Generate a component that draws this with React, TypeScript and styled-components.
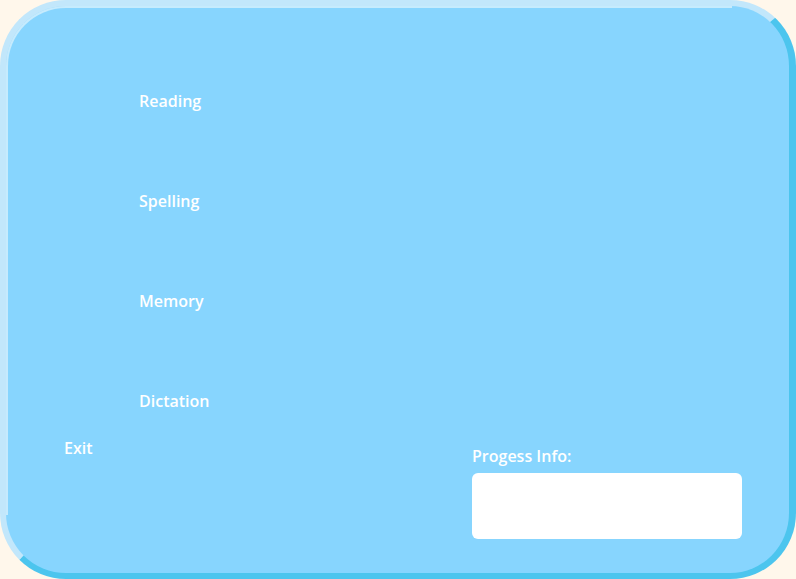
import React from "react";
import styled, { createGlobalStyle } from "styled-components";

const Global = createGlobalStyle`
  html, body { margin: 0; padding: 0; background: #FFF7EB; }
  body { font-family: "Open Sans", "Liberation Sans", sans-serif; }
  * { box-sizing: border-box; }
`;

const Panel = styled.div`
  position: relative;
  width: 796px;
  height: 579px;
  background: #87D5FE;
  border-style: solid;
  border-width: 6px 7px 6px 6px;
  border-top-color: #C2E7FB;
  border-left-color: #C2E7FB;
  border-right-color: #4CC5EE;
  border-bottom-color: #4CC5EE;
  border-radius: 66px;
  padding-top: 85px;
  display: flex;
  flex-direction: column;

  &::before {
    content: "";
    position: absolute;
    top: 0;
    left: 0;
    width: 724px;
    height: 507px;
    border-top: 2px solid rgba(225, 244, 253, 0.7);
    border-left: 2px solid rgba(225, 244, 253, 0.7);
    border-top-left-radius: 60px;
    pointer-events: none;
  }
`;

const Menu = styled.nav`
  display: flex;
  flex-direction: column;
  gap: 80px;
  padding-left: 133px;
`;

const Label = styled.div`
  color: #ffffff;
  font-weight: 600;
  font-size: 16px;
  line-height: 20px;
  height: 20px;
  white-space: nowrap;
`;

const Footer = styled.div`
  display: flex;
  justify-content: space-between;
  align-items: flex-start;
  margin-top: 27px;
  padding-left: 58px;
  padding-right: 47px;
`;

const Progress = styled.div`
  display: flex;
  flex-direction: column;
  gap: 7px;
  margin-top: 8px;
`;

const ProgressBox = styled.div`
  width: 270px;
  height: 66px;
  background: #ffffff;
  border-radius: 6px;
`;

export default function App() {
  return (
    <>
      <Global />
      <Panel>
        <Menu>
          <Label>Reading</Label>
          <Label>Spelling</Label>
          <Label>Memory</Label>
          <Label>Dictation</Label>
        </Menu>
        <Footer>
          <Label>Exit</Label>
          <Progress>
            <Label>Progess Info:</Label>
            <ProgressBox />
          </Progress>
        </Footer>
      </Panel>
    </>
  );
}
